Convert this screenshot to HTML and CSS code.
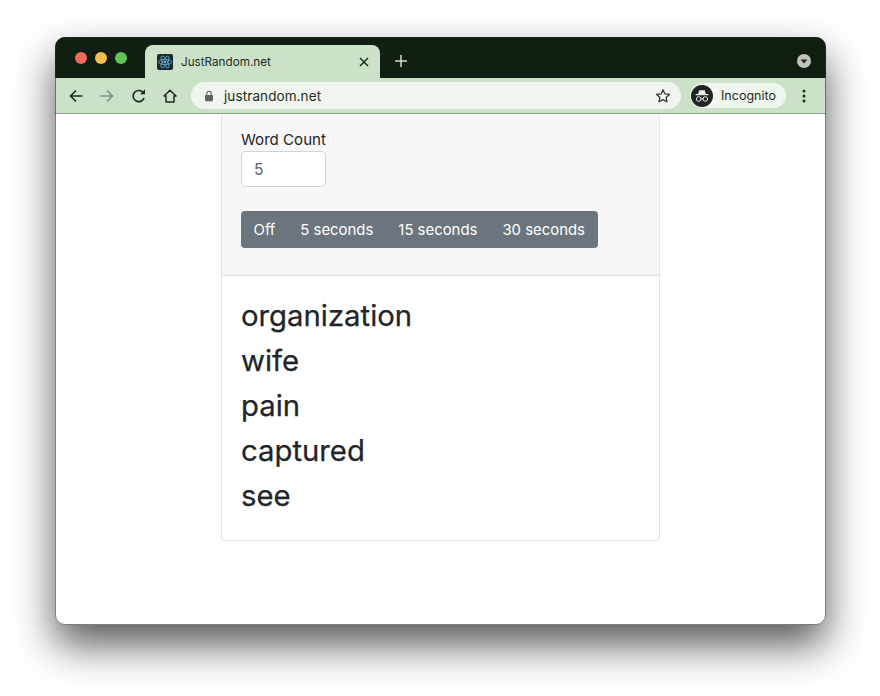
FILE: index.html
```html
<!DOCTYPE html>
<html lang="en">
<head>
<meta charset="utf-8">
<title>JustRandom.net</title>
<link rel="stylesheet" href="styles.css">
</head>
<body>
<div class="window">
  <div class="titlebar">
    <div class="lights">
      <span class="light red"></span><span class="light yellow"></span><span class="light green"></span>
    </div>
    <div class="tab">
      <svg class="favicon" viewBox="0 0 16 16" width="16" height="16">
        <rect width="16" height="16" rx="2" fill="#20262e"/>
        <g fill="none" stroke="#61b5d6" stroke-width=".8">
          <ellipse cx="8" cy="8" rx="6.6" ry="2.6"/>
          <ellipse cx="8" cy="8" rx="6.6" ry="2.6" transform="rotate(60 8 8)"/>
          <ellipse cx="8" cy="8" rx="6.6" ry="2.6" transform="rotate(120 8 8)"/>
        </g>
        <circle cx="8" cy="8" r="1.4" fill="#61b5d6"/>
      </svg>
      <span class="tab-title">JustRandom.net</span>
      <svg class="tab-close" viewBox="0 0 10 10" width="10" height="10"><path d="M1 1l8 8M9 1l-8 8" stroke="#1d2a20" stroke-width="1.5" fill="none"/></svg>
    </div>
    <svg class="new-tab" viewBox="0 0 12 12" width="12" height="12"><path d="M6 0v12M0 6h12" stroke="#d5ddd6" stroke-width="1.5" fill="none"/></svg>
    <svg class="tab-menu" viewBox="0 0 14 14" width="14" height="14"><circle cx="7" cy="7" r="7" fill="#c0c4c0"/><path d="M3.6 5.4h6.8L7 9.6z" fill="#1e271f"/></svg>
  </div>
  <div class="toolbar">
    <svg class="tool" viewBox="0 0 16 16" width="16" height="16"><path d="M14.5 8H2.5M8 2.5L2.5 8 8 13.5" stroke="#1f2a22" stroke-width="1.6" fill="none"/></svg>
    <svg class="tool" viewBox="0 0 16 16" width="16" height="16"><path d="M1.5 8h12M8 2.5L13.5 8 8 13.5" stroke="#848d86" stroke-width="1.6" fill="none"/></svg>
    <svg class="tool" viewBox="0 0 16 16" width="16" height="16"><path d="M13 10a5.6 5.6 0 1 1-.6-5" stroke="#1f2a22" stroke-width="1.7" fill="none"/><path d="M14 1.2v5h-5z" fill="#1f2a22"/></svg>
    <svg class="tool" viewBox="0 0 16 16" width="16" height="16"><path d="M8 2.2L2 8h2v6h8V8h2z" stroke="#1f2a22" stroke-width="1.5" fill="none" stroke-linejoin="round"/></svg>
    <div class="omnibox">
      <svg class="lock" viewBox="0 0 10 12" width="10" height="12"><path d="M2.8 5.5V3.4a2.2 2.2 0 0 1 4.4 0v2.1" stroke="#5e6560" stroke-width="1.1" fill="none"/><rect x="1" y="5" width="8" height="6.2" rx="1" fill="#5e6560"/></svg>
      <span class="url">justrandom.net</span>
      <svg class="star" viewBox="0 0 16 16" width="16" height="16"><path d="M8 1.8l1.9 4.1 4.5.5-3.3 3 .9 4.4L8 11.6l-4 2.2.9-4.4-3.3-3 4.5-.5z" stroke="#2f3832" stroke-width="1.3" fill="none" stroke-linejoin="round"/></svg>
    </div>
    <div class="profile">
      <svg class="avatar" viewBox="0 0 22 22" width="22" height="22">
        <circle cx="11" cy="11" r="11" fill="#202422"/>
        <path d="M7.2 9l1-3.8h5.6l1 3.8z" fill="#e8eee9"/>
        <path d="M4.6 9.6h12.8" stroke="#e8eee9" stroke-width="1.1"/>
        <g fill="none" stroke="#e8eee9" stroke-width="1"><circle cx="7.7" cy="14" r="2.3"/><circle cx="14.3" cy="14" r="2.3"/><path d="M10 14h2"/></g>
      </svg>
      <span class="profile-name">Incognito</span>
    </div>
    <svg class="kebab" viewBox="0 0 4 14" width="4" height="14"><g fill="#1f2a22"><circle cx="2" cy="2" r="1.5"/><circle cx="2" cy="7" r="1.5"/><circle cx="2" cy="12" r="1.5"/></g></svg>
  </div>
  <main class="page">
    <section class="card">
      <div class="settings">
        <label class="field-label" for="count">Word Count</label>
        <input class="count-input" id="count" type="text" value="5">
        <div class="btn-group">
          <span class="btn">Off</span>
          <span class="btn">5 seconds</span>
          <span class="btn">15 seconds</span>
          <span class="btn">30 seconds</span>
        </div>
      </div>
      <div class="words">
        <div class="word">organization</div>
        <div class="word">wife</div>
        <div class="word">pain</div>
        <div class="word">captured</div>
        <div class="word">see</div>
      </div>
    </section>
  </main>
</div>
</body>
</html>
```
FILE: styles.css
```css
* { box-sizing: border-box; }
html, body { margin: 0; height: 100%; background: #fff; overflow: hidden; }
body { padding: 37px 0 0 54.5px; font-family: Inter, "Liberation Sans", sans-serif; color: #212529; }
.window {
  width: 771px;
  height: 587.5px;
  border-radius: 10px;
  background: #fff;
  overflow: hidden;
  display: flex;
  flex-direction: column;
  outline: 1px solid rgba(40,40,40,.6);
  outline-offset: -1px;
  box-shadow: 0 20px 40px 0 rgba(0,0,0,.65);
}
.titlebar {
  height: 41px;
  background: #111f12;
  display: flex;
  align-items: flex-end;
  flex: none;
}
.lights { display: flex; gap: 8px; padding: 0 0 14px 20px; width: 90.5px; flex: none; }
.light { width: 12px; height: 12px; border-radius: 50%; }
.red { background: #ee6a5f; }
.yellow { background: #f5bd4f; }
.green { background: #61c454; }
.tab {
  width: 235px;
  height: 33px;
  background: #cbe2c8;
  border-radius: 8px 8px 0 0;
  display: flex;
  align-items: center;
  padding: 0 11px 0 12px;
  flex: none;
}
.favicon { flex: none; }
.tab-title { margin-left: 8px; font-size: 11.7px; color: #1f2a22; flex: 1; }
.new-tab { margin: 0 0 11px 15px; flex: none; }
.tab-menu { margin: 0 15px 10px auto; flex: none; }
.toolbar {
  height: 36px;
  background: #cbe2c8;
  border-bottom: 1px solid #8ea18e;
  display: flex;
  align-items: center;
  padding: 0 0 0 13.5px;
  flex: none;
}
.tool { margin-right: 15px; flex: none; }
.tool:nth-child(2) { margin-right: 16px; }
.omnibox {
  width: 490px;
  height: 27px;
  margin-left: -2px;
  background: #eff6ee;
  border-radius: 14px;
  display: flex;
  align-items: center;
  padding: 0 10px 0 13px;
  flex: none;
}
.url { margin-left: 10px; font-size: 13.5px; color: #1f2a22; flex: 1; letter-spacing: .1px; }
.profile {
  margin-left: 9px;
  width: 96px;
  height: 25px;
  background: #eff6ee;
  border-radius: 13px;
  display: flex;
  align-items: center;
  padding-left: 1px;
  flex: none;
}
.profile-name { margin-left: 8px; font-size: 12.5px; color: #1f2a22; }
.kebab { margin-left: 15.5px; flex: none; }
.page { flex: 1; display: flex; justify-content: center; align-items: flex-start; }
.card {
  width: 439px;
  height: 427px;
  border: 1px solid #e2e4e6;
  border-radius: 4px;
  border-top: 0;
  overflow: hidden;
}
.settings {
  height: 162px;
  background: #f7f7f7;
  border-bottom: 1px solid #dfdfdf;
  padding: 14px 19.5px 0;
}
.field-label { display: block; font-size: 15.1px; line-height: 23px; color: #212529; }
.count-input {
  display: block;
  width: 85px;
  height: 36px;
  border: 1px solid #ced4da;
  border-radius: 4px;
  padding: 0 12px;
  font: 15.5px Inter, "Liberation Sans", sans-serif;
  color: #5b6369;
  background: #fff;
}
.btn-group {
  display: inline-flex;
  margin-top: 24px;
  height: 37px;
  background: #6c757d;
  border-radius: 4px;
  align-items: center;
  padding: 1px 13px 0 12.5px;
  gap: 25px;
}
.btn { font-size: 14.9px; color: #fff; white-space: nowrap; }
.words { padding: 17px 19.5px 0; }
.word { font-size: 29.3px; line-height: 45px; color: #212529; -webkit-text-stroke: .25px #212529; }
```
